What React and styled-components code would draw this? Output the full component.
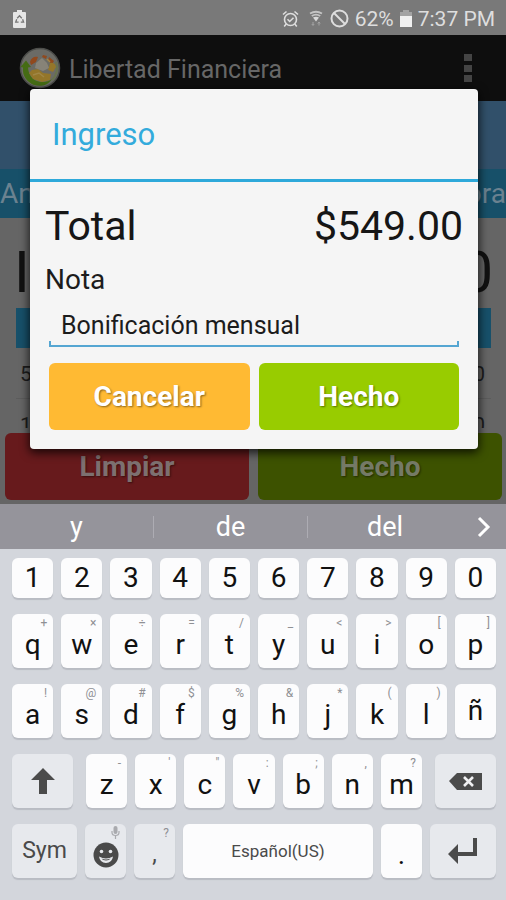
import React from 'react';
import styled, { createGlobalStyle } from 'styled-components';

const GlobalStyle = createGlobalStyle`
  *, *::before, *::after { box-sizing: border-box; }
  body { margin: 0; font-family: Roboto, sans-serif; background: #d3d6dc; }
  button, input { font-family: inherit; margin: 0; border: 0; padding: 0; }
`;

const Phone = styled.div`
  display: flex;
  flex-direction: column;
  min-height: 100vh;
  overflow: hidden;
`;

const StatusBar = styled.header`
  display: flex;
  align-items: center;
  justify-content: space-between;
  height: 35px;
  padding: 2px 11px 0 13px;
  background: #797979;
  color: #dedede;
  font-size: 21px;
`;

const StatusGroup = styled.div`
  display: flex;
  align-items: center;
  gap: 6px;
`;

const Wifi = styled.span`
  display: flex;
  margin: 0 1px 0 4px;
`;

const AppArea = styled.div`
  position: relative;
  display: flex;
  flex-direction: column;
  height: 469px;
  background: #656565;
`;

const AppBar = styled.div`
  display: flex;
  align-items: center;
  flex: none;
  height: 66px;
  padding: 0 34px 0 19px;
  gap: 8px;
  background: #0e0e0e;
`;

const AppTitle = styled.h1`
  flex: 1;
  margin: 0;
  padding-top: 2px;
  font-size: 25px;
  font-weight: 400;
  color: #676767;
`;

const MenuButton = styled.button`
  display: flex;
  background: none;
`;

const Banner = styled.div`
  flex: none;
  height: 68px;
  background: #31506a;
`;

const Tabs = styled.div`
  display: flex;
  justify-content: space-between;
  align-items: center;
  flex: none;
  height: 49px;
  background: #175069;
  color: #6b8290;
  font-size: 28px;
`;

const Summary = styled.div`
  display: flex;
  justify-content: space-between;
  align-items: center;
  flex: none;
  height: 90px;
  padding: 18px 13px 0 14px;
  color: #111;
  font-size: 58px;
`;

const Ledger = styled.div`
  display: flex;
  flex-direction: column;
  flex: 1;
  margin: 0 15px 0 16px;
  overflow: hidden;
`;

const LedgerHead = styled.div`
  flex: none;
  height: 40px;
  background: #17506a;
`;

const LedgerRow = styled.div`
  display: flex;
  justify-content: space-between;
  align-items: center;
  flex: none;
  height: 51px;
  padding: 2px 6px 0 4px;
  border-bottom: 1px solid #5c5c5c;
  color: #1d1d1d;
  font-size: 21px;
`;

const ButtonRow = styled.div`
  display: flex;
  gap: 9px;
  padding: ${p => p.$inset};
`;

const tones = {
  amber: ['#ffba33', '#fff'],
  green: ['#98cc00', '#fff'],
  dimRed: ['#671a1c', '#7d7070'],
  dimGreen: ['#3d5200', '#757a66'],
};

const ActionButton = styled.button`
  flex: 1;
  height: 67px;
  border-radius: 6px;
  background: ${p => tones[p.$tone][0]};
  color: ${p => tones[p.$tone][1]};
  font-size: 28px;
  font-weight: 700;
  line-height: 32px;
  text-shadow: 1px 1px 2px rgba(0, 0, 0, 0.45);
`;

const DialogLayer = styled.div`
  position: absolute;
  inset: 0;
  display: flex;
  align-items: flex-start;
  padding: 54px 28px 0 30px;
`;

const Dialog = styled.form`
  flex: 1;
  background: #f5f5f5;
  border-radius: 4px;
  box-shadow: 0 3px 10px 1px rgba(0, 0, 0, 0.75);
`;

const DialogTitle = styled.h2`
  margin: 0;
  padding: 28px 22px 26px;
  border-bottom: 3px solid #2ea9da;
  color: #33abdc;
  font-size: 31px;
  font-weight: 400;
  line-height: 36px;
`;

const TotalRow = styled.div`
  display: flex;
  justify-content: space-between;
  padding: 20px 15px 0;
  color: #161616;
  font-size: 41px;
  line-height: 48px;
`;

const NoteLabel = styled.label`
  display: block;
  padding: 14px 15px 0;
  color: #1c1c1c;
  font-size: 28px;
  line-height: 32px;
`;

const NoteField = styled.div`
  margin: 8px 19px 16px;
  background:
    linear-gradient(#55a6d2, #55a6d2) left bottom / 2px 6px no-repeat,
    linear-gradient(#55a6d2, #55a6d2) right bottom / 2px 6px no-repeat,
    linear-gradient(#55a6d2, #55a6d2) left bottom / 100% 2px no-repeat;
`;

const NoteInput = styled.input`
  display: block;
  width: 100%;
  height: 43px;
  padding: 0 12px;
  background: none;
  outline: none;
  color: #1c1c1c;
  font-size: 25px;
`;

const Suggestions = styled.div`
  display: grid;
  grid-template-columns: 154fr 154fr 154fr 44fr;
  align-items: center;
  height: 45px;
  background: #95949b;
`;

const Suggestion = styled.button`
  height: 22px;
  background: none;
  border-right: ${p => (p.$divided ? '1px solid #adacb3' : '0')};
  color: #fff;
  font-size: 27px;
  line-height: 22px;
`;

const MoreButton = styled.button`
  display: flex;
  justify-content: center;
  background: none;
`;

const Keyboard = styled.div`
  display: flex;
  flex-direction: column;
  flex: 1;
  gap: 16px;
  padding: 9px 10px 20px 12px;
  background: #d3d6dc;
`;

const KeyRow = styled.div`
  display: grid;
  grid-template-columns: ${p => p.$columns};
  gap: ${p => p.$gap || '8px'};
`;

const KeyCap = styled.button`
  position: relative;
  display: flex;
  align-items: center;
  justify-content: center;
  min-width: 0;
  height: ${p => (p.$short ? '40px' : '54px')};
  padding-top: ${p => (p.$low ? '8px' : '0')};
  border-radius: 6px;
  background: ${p => (p.$muted ? '#e7e9ed' : '#fcfcfd')};
  box-shadow: 0 2px 1px #b9bcc3;
  color: ${p => (p.$soft ? '#4a4a4a' : '#111')};
  font-size: ${p => p.$size || '28px'};
  line-height: 30px;
`;

const Hint = styled.span`
  position: absolute;
  top: 2px;
  right: 6px;
  color: #8f9094;
  font-size: 12px;
  line-height: 14px;
`;

const letterRows = [
  [['q', '+'], ['w', '×'], ['e', '÷'], ['r', '='], ['t', '/'], ['y', '_'], ['u', '<'], ['i', '>'], ['o', '['], ['p', ']']],
  [['a', '!'], ['s', '@'], ['d', '#'], ['f', '$'], ['g', '%'], ['h', '&'], ['j', '*'], ['k', '('], ['l', ')'], ['ñ', '']],
];
const bottomLetters = [['z', '-'], ['x', "'"], ['c', '"'], ['v', ':'], ['b', ';'], ['n', ','], ['m', '?']];

const Letter = ({ data: [char, hint] }) => (
  <KeyCap type="button" $low={Boolean(hint)}>
    {char}
    {hint && <Hint>{hint}</Hint>}
  </KeyCap>
);

const RecycleBattery = () => (
  <svg width="13" height="18" viewBox="0 0 13 18" aria-hidden="true">
    <path d="M4 0h5v2h3q1 0 1 1v14q0 1-1 1H1q-1 0-1-1V3q0-1 1-1h3z" fill="#e6e6e6" />
    <path d="M4.2 8.2 6.5 5.8l2.3 2.4M9.6 9.2l1 3H7.8M5.6 12.2H2.7l1-3" fill="none" stroke="#777" strokeWidth="1.3" />
  </svg>
);

const AlarmIcon = () => (
  <svg width="17" height="18" viewBox="0 0 17 18" fill="none" stroke="#dedede" strokeWidth="1.6" aria-hidden="true">
    <circle cx="8.5" cy="9.5" r="6" />
    <path d="M1 4.5 4.5 1.5M16 4.5 12.5 1.5M5.5 9.3l2.2 2.2 3.8-3.7M4.2 14l-2 2.5M12.8 14l2 2.5" />
  </svg>
);

const WifiIcon = () => (
  <svg width="14" height="17" viewBox="0 0 14 17" aria-hidden="true">
    <path d="M1 3.5Q7 0 13 3.500M2.800 6Q7 3.200 11.200 6" fill="none" stroke="#c4c4c4" strokeWidth="1.800" />
    <path d="M4 7.500Q7 5.800 10 7.500L7 11.500z" fill="#dadada" />
    <path d="M4 12v3M2.8 14 4 15.5 5.2 14M10 15.5v-3M8.8 13.5 10 12l1.2 1.5" fill="none" stroke="#a5a5a5" strokeWidth="1" />
  </svg>
);

const BlockIcon = () => (
  <svg width="19" height="19" viewBox="0 0 19 19" fill="none" stroke="#dedede" strokeWidth="2" aria-hidden="true">
    <circle cx="9.5" cy="9.5" r="8" />
    <path d="m4 4 11 11" />
  </svg>
);

const BatteryIcon = () => (
  <svg width="12" height="17" viewBox="0 0 12 17" aria-hidden="true">
    <path d="M3 0h6v2h3v5H0V2h3z" fill="#a3a3a3" />
    <path d="M0 6h12v11H0z" fill="#f0f0f0" />
  </svg>
);

const Logo = () => (
  <svg width="42" height="42" viewBox="0 0 42 42" aria-hidden="true">
    <circle cx="21" cy="21" r="19.5" fill="#6b6b66" stroke="#4d4e4b" strokeWidth="1.5" />
    <path d="M1.500 20 7 13.500l5 6.500-3 .4c.5 7 4 11.5 9 13.6 5 2 11 1 15-2C28 40 17 41 10 35 5 31 3.5 26 4 20.5z" fill="#456c14" />
    <path d="M33 33c5-5 6-12 4-18" fill="none" stroke="#67724e" strokeWidth="2" />
    <path d="M11 15c1-4 4-6 8-5l-2 5-5 3zM24 8l4 1-1 3-4-2zM30 10l5 4-2 3-4-3z" fill="#91491d" />
    <path d="M31 16q5-1 6 4l-3 5-5-2zM13 23l6-1 5 4 8 1-1 6-8 2-9-3-4-6z" fill="#94762a" />
    <path d="m17 16 6-5 5 5 2 5-6 3-8-3z" fill="#878378" />
    <path d="m14 28 6-2 5 4M28 12l3 3" fill="none" stroke="#a08646" strokeWidth="1.5" />
  </svg>
);

const OverflowIcon = () => (
  <svg width="8" height="30" viewBox="0 0 8 30" fill="#444" aria-hidden="true">
    <path d="M0 1h8v7H0zM0 12h8v7H0zM0 22h8v7H0z" />
  </svg>
);

const ChevronIcon = () => (
  <svg width="14" height="22" viewBox="0 0 14 22" fill="none" stroke="#fff" strokeWidth="3" aria-hidden="true">
    <path d="m2 2 9 9-9 9" />
  </svg>
);

const ShiftIcon = () => (
  <svg width="24" height="26" viewBox="0 0 24 26" fill="#4b4b4b" aria-hidden="true">
    <path d="M12 0 24 12h-8v14H8V12H0z" />
  </svg>
);

const BackspaceIcon = () => (
  <svg width="33" height="18" viewBox="0 0 33 18" aria-hidden="true">
    <path d="M0 9 8 1h25v17H8z" fill="#4b4b4b" />
    <path d="m15 5 9 9m0-9-9 9" stroke="#f0f0f2" strokeWidth="2.6" />
  </svg>
);

const EnterIcon = () => (
  <svg width="30" height="26" viewBox="0 0 30 26" fill="#4b4b4b" aria-hidden="true">
    <path d="M25 0h4v18H10v8L0 16 10 6v8h15z" />
  </svg>
);

const SmileIcon = () => (
  <svg width="26" height="26" viewBox="0 0 26 26" aria-hidden="true">
    <circle cx="13" cy="13" r="12.5" fill="#4a4a4a" />
    <circle cx="8.5" cy="9.5" r="1.8" fill="#e7e9ed" />
    <circle cx="17.5" cy="9.5" r="1.8" fill="#e7e9ed" />
    <path d="M6 14.500q7 4 14 0-1 6.500-7 6.500t-7-6.500z" fill="#e7e9ed" />
    <path d="M8.500 16.500q4.500 2 9 0-1 2-4.500 2t-4.500-2z" fill="#4a4a4a" />
  </svg>
);

const MicIcon = () => (
  <svg width="9" height="13" viewBox="0 0 9 13" aria-hidden="true">
    <rect x="2.5" y="0" width="4" height="8" rx="2" fill="#a9aaae" />
    <path d="M1 5v1.5q0 3 3.5 3t3.5-3V5M4.5 9.5V13" fill="none" stroke="#a9aaae" strokeWidth="1.2" />
  </svg>
);

export default function App() {
  return (
    <>
      <GlobalStyle />
      <Phone>
        <StatusBar>
          <RecycleBattery />
          <StatusGroup>
            <AlarmIcon />
            <Wifi><WifiIcon /></Wifi>
            <BlockIcon />
            <span>62%</span>
            <BatteryIcon />
            <span>7:37 PM</span>
          </StatusGroup>
        </StatusBar>

        <AppArea>
          <AppBar>
            <Logo />
            <AppTitle>Libertad Financiera</AppTitle>
            <MenuButton aria-label="Menú"><OverflowIcon /></MenuButton>
          </AppBar>
          <Banner />
          <Tabs><span>An</span><span>ora</span></Tabs>
          <Summary><span>I</span><span>0</span></Summary>
          <Ledger>
            <LedgerHead />
            <LedgerRow><span>5</span><span>0</span></LedgerRow>
            <LedgerRow><span>1</span><span>0</span></LedgerRow>
          </Ledger>
          <ButtonRow $inset="5px 4px 4px 5px">
            <ActionButton type="button" $tone="dimRed">Limpiar</ActionButton>
            <ActionButton type="button" $tone="dimGreen">Hecho</ActionButton>
          </ButtonRow>

          <DialogLayer>
            <Dialog role="dialog" aria-labelledby="dialog-title" onSubmit={e => e.preventDefault()}>
              <DialogTitle id="dialog-title">Ingreso</DialogTitle>
              <TotalRow><span>Total</span><span>$549.00</span></TotalRow>
              <NoteLabel htmlFor="note">Nota</NoteLabel>
              <NoteField>
                <NoteInput id="note" type="text" defaultValue="Bonificación mensual" />
              </NoteField>
              <ButtonRow $inset="0 19px 19px">
                <ActionButton type="button" $tone="amber">Cancelar</ActionButton>
                <ActionButton type="submit" $tone="green">Hecho</ActionButton>
              </ButtonRow>
            </Dialog>
          </DialogLayer>
        </AppArea>

        <Suggestions>
          <Suggestion type="button" $divided>y</Suggestion>
          <Suggestion type="button" $divided>de</Suggestion>
          <Suggestion type="button">del</Suggestion>
          <MoreButton type="button" aria-label="Más sugerencias"><ChevronIcon /></MoreButton>
        </Suggestions>

        <Keyboard>
          <KeyRow $columns="repeat(10, 1fr)">
            {[...'1234567890'].map(n => <KeyCap key={n} type="button" $short>{n}</KeyCap>)}
          </KeyRow>
          {letterRows.map((row, i) => (
            <KeyRow key={i} $columns="repeat(10, 1fr)">
              {row.map(k => <Letter key={k[0]} data={k} />)}
            </KeyRow>
          ))}
          <KeyRow $columns="61fr 336fr 61fr" $gap="13px">
            <KeyCap type="button" $muted aria-label="Mayúsculas"><ShiftIcon /></KeyCap>
            <KeyRow $columns="repeat(7, 1fr)">
              {bottomLetters.map(k => <Letter key={k[0]} data={k} />)}
            </KeyRow>
            <KeyCap type="button" $muted aria-label="Borrar"><BackspaceIcon /></KeyCap>
          </KeyRow>
          <KeyRow $columns="65fr 41fr 41fr 190fr 41fr 66fr">
            <KeyCap type="button" $muted $soft $size="23px">Sym</KeyCap>
            <KeyCap type="button" $muted $low aria-label="Emoji">
              <SmileIcon />
              <Hint><MicIcon /></Hint>
            </KeyCap>
            <KeyCap type="button" $muted $low $soft $size="23px">,<Hint>?</Hint></KeyCap>
            <KeyCap type="button" $soft $size="17px">Español(US)</KeyCap>
            <KeyCap type="button" $low>.</KeyCap>
            <KeyCap type="button" $muted aria-label="Intro"><EnterIcon /></KeyCap>
          </KeyRow>
        </Keyboard>
      </Phone>
    </>
  );
}
